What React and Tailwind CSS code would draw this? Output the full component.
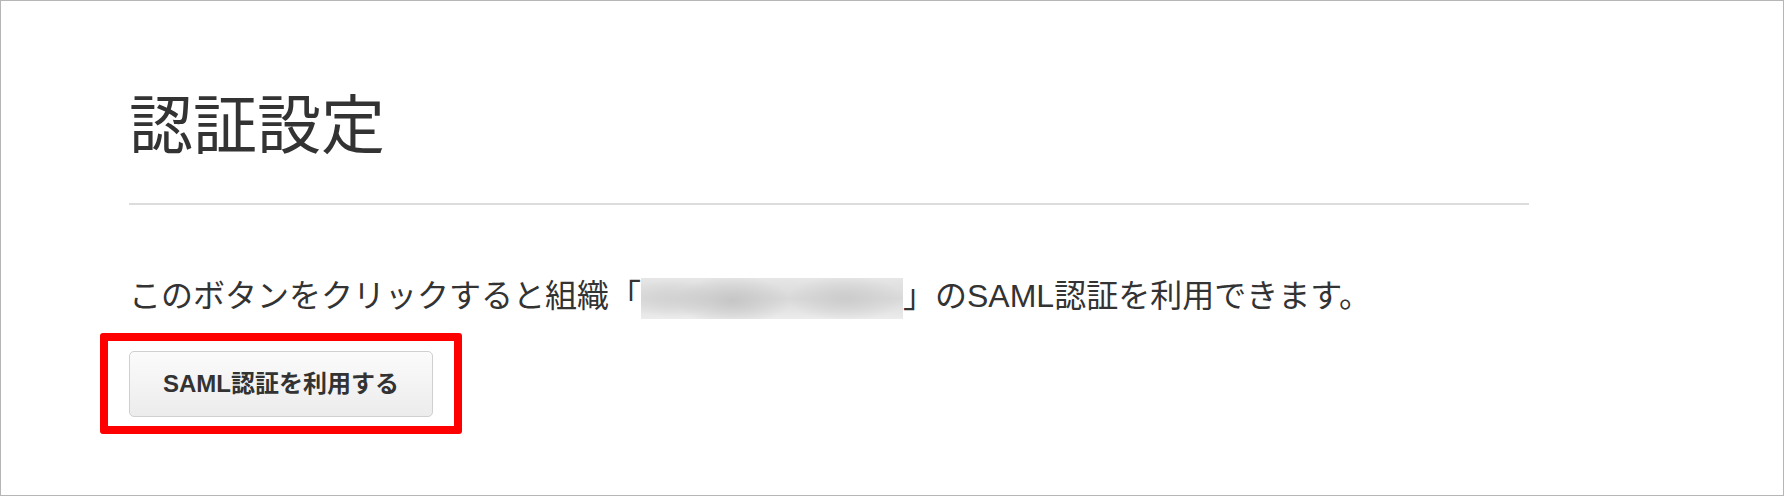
export default function App() {
  const font = {};
  return (
    <div className="w-[1784px] h-[496px] border border-[#b6b6b6] bg-white box-border font-['Liberation_Sans','Noto_Sans_CJK_JP',sans-serif] text-[#333333]">
      <div className="ml-[128px] w-[1400px] pt-[93px]">
        <h1 className="text-[64px] leading-[64px] font-normal tracking-normal">認証設定</h1>
        <div className="mt-[45px] h-[2px] bg-[#dcdcdc]" />
        <p className="mt-[71px] text-[32px] leading-[40px] whitespace-nowrap">
          このボタンをクリックすると組織「
          <span className="inline-block align-middle w-[262px] h-[41px] bg-[radial-gradient(ellipse_22%_60%_at_35%_55%,#c6c6c6,transparent),radial-gradient(ellipse_22%_55%_at_78%_50%,#cccccc,transparent),radial-gradient(ellipse_18%_45%_at_12%_50%,#d2d2d2,transparent),linear-gradient(to_bottom,#e6e6e6,#d9d9d9_50%,#ececec)]" />
          」のSAML認証を利用できます。
        </p>
        <div className="mt-[14px] -ml-[29px] inline-flex border-[8px] border-[#ff0000] rounded-[3px] pl-[21px] pr-[21px] pt-[10px] pb-[9px]">
          <button className="w-[304px] h-[66px] rounded-[5px] border border-[#cfcfcf] bg-[linear-gradient(to_bottom,#fbfbfb,#ececec)] text-[24px] font-bold text-[#333333] flex items-center justify-center">
            SAML認証を利用する
          </button>
        </div>
      </div>
    </div>
  );
}
